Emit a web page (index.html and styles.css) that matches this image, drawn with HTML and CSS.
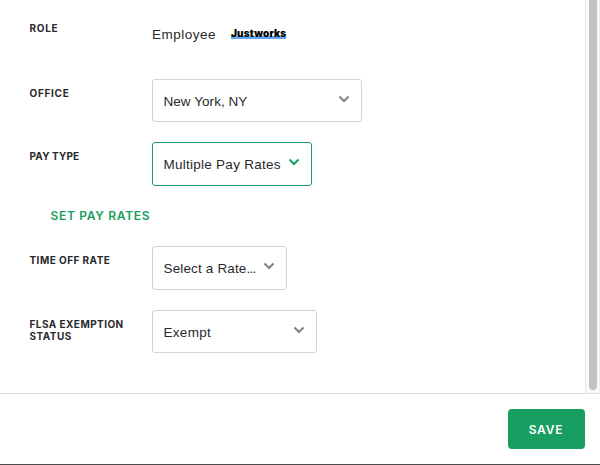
FILE: index.html
```html
<!DOCTYPE html>
<html lang="en"><head><meta charset="utf-8"><title>Employee details</title><link rel="stylesheet" href="styles.css"></head>
<body>
<main class="content">
<form class="form">
<div class="row role"><div class="label l-role">ROLE</div><div class="person"><span class="employee">Employee</span><span class="brand">Justworks</span></div></div>
<div class="row office"><div class="label l-office">OFFICE</div><div class="select"><span class="t1">New York, NY</span><svg class="chev" viewBox="0 0 12 8"><path d="M1.500 1.500 6 6l4.500-4.500"/></svg></div></div>
<div class="row pay"><div class="label l-pay">PAY TYPE</div><div class="select active"><span class="t2">Multiple Pay Rates</span><svg class="chev" viewBox="0 0 12 8"><path d="M1.500 1.500 6 6l4.500-4.500"/></svg></div></div>
<a class="link">SET PAY RATES</a>
<div class="row rate"><div class="label l-rate">TIME OFF RATE</div><div class="select"><span class="t3">Select a Rate<span class="dots">...</span></span><svg class="chev" viewBox="0 0 12 8"><path d="M1.500 1.500 6 6l4.500-4.500"/></svg></div></div>
<div class="row flsa"><div class="label l-flsa">FLSA EXEMPTION<br>STATUS</div><div class="select"><span class="t4">Exempt</span><svg class="chev" viewBox="0 0 12 8"><path d="M1.500 1.500 6 6l4.500-4.500"/></svg></div></div>
</form>
<div class="track"><div class="thumb"></div></div>
</main>
<footer class="footer"><button class="save">SAVE</button></footer>
</body></html>
```
FILE: styles.css
```css
* { box-sizing: border-box; }
body { margin: 0; height: 465px; overflow: hidden; background: #fff; color: #29292c; font-family: "Liberation Sans", sans-serif; display: flex; flex-direction: column; }
.content { height: 393px; display: flex; }
.form { width: 585px; padding: 17px 0 0 29.5px; }
.row { display: grid; grid-template-columns: 122.5px auto; justify-content: start; align-items: start; }
.label { padding-top: 8px; font-family: Inter, sans-serif; font-size: 10px; line-height: 12px; font-weight: 700; letter-spacing: .45px; white-space: nowrap; }
.role { height: 62px; }
.role .label { padding-top: 5px; }
.label.l-role, .label.l-office { letter-spacing: .7px; }
.label.l-pay { letter-spacing: .15px; }
.person { display: flex; padding-top: 9px; }
.employee { width: 79px; font-size: 13.5px; line-height: 18px; letter-spacing: .5px; }
.brand { font-family: Inter, sans-serif; font-size: 10px; line-height: 14px; font-weight: 900; height: 13px; letter-spacing: .15px; color: #000; background: linear-gradient(#62a8f5, #62a8f5) 0 100% / 100% 3px no-repeat; }
.select { height: 43px; border: 1px solid #d2d2dc; border-radius: 3px; display: flex; align-items: center; justify-content: space-between; padding: 1px 11px 0 10.5px; font-size: 13.5px; letter-spacing: .3px; white-space: nowrap; }
.t1 { letter-spacing: .05px; }
.t2 { letter-spacing: .26px; }
.t3 { letter-spacing: .15px; }
.dots { letter-spacing: -.8px; }
.office { height: 63px; } .office .select { width: 210px; }
.pay { height: 63px; } .pay .select { width: 160px; }
.select.active { height: 44px; border-color: #179e60; }
.pay .select, .rate .select { padding-top: 0; }
.chev { flex: none; width: 12px; height: 8px; margin-top: -4px; fill: none; stroke: #80808a; stroke-width: 2; }
.active .chev { stroke: #179e60; }
.link { display: block; margin-left: 21px; height: 41px; padding-top: 2px; font-family: Inter, sans-serif; font-size: 12px; line-height: 18px; font-weight: 600; letter-spacing: .7px; color: #179e60; }
.rate { height: 64px; } .rate .select { width: 135px; height: 44px; }
.flsa .select { width: 165px; }
.track { width: 15px; background: #fafafa; border-left: 1px solid #e5e5e5; border-right: 1px solid #eee; padding-left: 3px; }
.thumb { width: 8px; height: 390px; background: #c1c1c1; border-radius: 0 0 4px 4px; }
.footer { height: 72px; border-top: 1px solid #dedee2; border-bottom: 1px solid #4b4b4b; padding: 15px 15px 0 0; display: flex; justify-content: flex-end; }
.save { width: 77px; height: 40px; padding: 0 1px 0 0; border: 0; border-radius: 4px; background: #179e60; color: #fff; font: 600 12px Inter, sans-serif; letter-spacing: .8px; }
```
